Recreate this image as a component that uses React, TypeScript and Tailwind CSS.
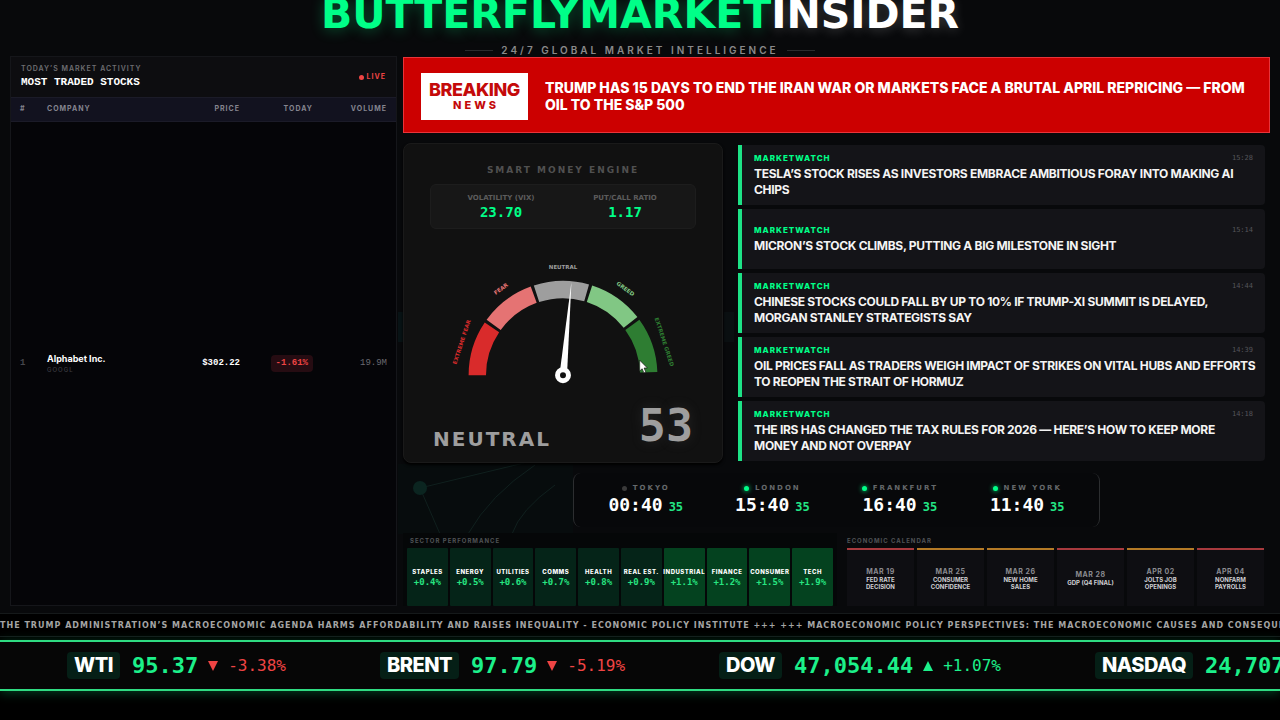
import type { ReactNode } from "react";

const inter = "font-['Inter',sans-serif]";
const mono = "font-['DejaVu_Sans_Mono',monospace]";
const wide = "font-['DejaVu_Sans',sans-serif]";

const news = [
  { time: "15:28", title: "TESLA’S STOCK RISES AS INVESTORS EMBRACE AMBITIOUS FORAY INTO MAKING AI CHIPS" },
  { time: "15:14", title: "MICRON’S STOCK CLIMBS, PUTTING A BIG MILESTONE IN SIGHT" },
  { time: "14:44", title: "CHINESE STOCKS COULD FALL BY UP TO 10% IF TRUMP-XI SUMMIT IS DELAYED, MORGAN STANLEY STRATEGISTS SAY" },
  { time: "14:39", title: "OIL PRICES FALL AS TRADERS WEIGH IMPACT OF STRIKES ON VITAL HUBS AND EFFORTS TO REOPEN THE STRAIT OF HORMUZ" },
  { time: "14:18", title: "THE IRS HAS CHANGED THE TAX RULES FOR 2026 — HERE’S HOW TO KEEP MORE MONEY AND NOT OVERPAY" },
];

const clocks = [
  { city: "TOKYO", time: "00:40", open: false },
  { city: "LONDON", time: "15:40", open: true },
  { city: "FRANKFURT", time: "16:40", open: true },
  { city: "NEW YORK", time: "11:40", open: true },
];

const sectors = [
  { name: "STAPLES", change: "+0.4%", strong: false },
  { name: "ENERGY", change: "+0.5%", strong: false },
  { name: "UTILITIES", change: "+0.6%", strong: false },
  { name: "COMMS", change: "+0.7%", strong: false },
  { name: "HEALTH", change: "+0.8%", strong: false },
  { name: "REAL EST.", change: "+0.9%", strong: false },
  { name: "INDUSTRIAL", change: "+1.1%", strong: true },
  { name: "FINANCE", change: "+1.2%", strong: true },
  { name: "CONSUMER", change: "+1.5%", strong: true },
  { name: "TECH", change: "+1.9%", strong: true },
];

const events = [
  { date: "MAR 19", name: "FED RATE DECISION", high: true },
  { date: "MAR 25", name: "CONSUMER CONFIDENCE", high: false },
  { date: "MAR 26", name: "NEW HOME SALES", high: false },
  { date: "MAR 28", name: "GDP (Q4 FINAL)", high: true },
  { date: "APR 02", name: "JOLTS JOB OPENINGS", high: false },
  { date: "APR 04", name: "NONFARM PAYROLLS", high: true },
];

const quotes = [
  { symbol: "WTI", price: "95.37", change: "-3.38%", up: false },
  { symbol: "BRENT", price: "97.79", change: "-5.19%", up: false },
  { symbol: "DOW", price: "47,054.44", change: "+1.07%", up: true },
  { symbol: "NASDAQ", price: "24,707.12", change: "+1.24%", up: true },
];

function Header() {
  return (
    <header className="flex h-14 flex-col items-center">
      <h1 className={`${wide} -mt-1 text-[41px] leading-9 font-bold whitespace-nowrap text-white [text-shadow:0_2px_12px_rgba(255,255,255,0.2)]`}>
        <span className="text-[#00ff88] [text-shadow:0_2px_14px_rgba(0,255,136,0.3)]">BUTTERFLYMARKET</span>INSIDER
      </h1>
      <div className="mt-3 flex items-center gap-2">
        <span className="h-px w-7 bg-[#2a2c2e]" />
        <p className={`${inter} text-[10px] leading-3 font-semibold tracking-[3px] text-[#8a8a8a]`}>24/7 GLOBAL MARKET INTELLIGENCE</p>
        <span className="h-px w-7 bg-[#2a2c2e]" />
      </div>
    </header>
  );
}

function Th({ children, className }: { children: ReactNode; className: string }) {
  return <th scope="col" className={`py-0 font-bold ${className}`}>{children}</th>;
}

function MostTraded() {
  return (
    <section className="grid grid-rows-[40px_1fr] border border-[#15161a] bg-[#050508]">
      <div className="flex items-center justify-between bg-[#0d0d10] px-[10px]">
        <div>
          <p className={`${inter} text-[7px] leading-[10px] font-semibold tracking-[1px] text-[#6d6d72]`}>TODAY’S MARKET ACTIVITY</p>
          <h2 className="font-['Liberation_Mono',monospace] text-[11px] leading-4 font-bold text-white">MOST TRADED STOCKS</h2>
        </div>
        <p className={`${inter} flex items-center gap-[3px] text-[7px] font-bold tracking-[1px] text-[#ef4444]`}>
          <span className="size-[5px] rounded-full bg-[#ef4444]" />LIVE
        </p>
      </div>
      <table className="h-full w-full border-collapse">
        <thead>
          <tr className={`${inter} h-6 border-y border-[#1b1b28] bg-[#12121f] text-[7px] tracking-[1px] text-[#85858f]`}>
            <Th className="w-9 pl-[9px] text-left">#</Th>
            <Th className="text-left">COMPANY</Th>
            <Th className="w-20 text-right">PRICE</Th>
            <Th className="w-[73px] text-right">TODAY</Th>
            <Th className="w-[83px] pr-[9px] text-right">VOLUME</Th>
          </tr>
        </thead>
        <tbody>
          <tr className="font-['Liberation_Mono',monospace] text-[9px] font-bold">
            <td className="pl-[9px] text-[#46464c]">1</td>
            <td className={inter}>
              <p className="text-[9px] leading-3 font-bold text-white">Alphabet Inc.</p>
              <p className="text-[6px] leading-[10px] font-medium tracking-[1px] text-[#3c3c42]">GOOGL</p>
            </td>
            <td className="text-right text-white">$302.22</td>
            <td className="text-right">
              <span className="inline-block rounded-sm bg-[#260c12] px-[5px] py-[2px] text-[#ef4444]">-1.61%</span>
            </td>
            <td className="pr-[9px] text-right font-normal text-[#6a6a70]">19.9M</td>
          </tr>
        </tbody>
      </table>
    </section>
  );
}

function Breaking() {
  return (
    <section className={`${inter} flex h-[76px] items-center gap-[17px] border border-[#e8343a] bg-[#cc0000] px-[17px] pt-[14px] pb-3`}>
      <div className="flex h-[47px] w-[107px] shrink-0 flex-col items-center justify-center bg-white text-[#c40a0a]">
        <span className="text-[18px] leading-[17px] font-extrabold tracking-tight">BREAKING</span>
        <span className="pl-[3px] text-[11px] leading-[14px] font-extrabold tracking-[3px]">NEWS</span>
      </div>
      <h2 className="text-[14px] leading-[17px] font-extrabold text-white">
        TRUMP HAS 15 DAYS TO END THE IRAN WAR OR MARKETS FACE A BRUTAL APRIL REPRICING — FROM OIL TO THE S&amp;P 500
      </h2>
    </section>
  );
}

function polar(deg: number, r: number) {
  const a = (deg * Math.PI) / 180;
  return `${(320 + r * Math.cos(a)).toFixed(2)} ${(250 - r * Math.sin(a)).toFixed(2)}`;
}

function Gauge() {
  const colors = ["#d92b2b", "#e57373", "#9e9e9e", "#81c784", "#2e7d32"];
  const labels = [
    { text: "EXTREME FEAR", x: 116, y: 183, r: -72, fill: "#d92b2b" },
    { text: "FEAR", x: 195, y: 76, r: -36, fill: "#e57373" },
    { text: "NEUTRAL", x: 320, y: 33, r: 0, fill: "#9e9e9e" },
    { text: "GREED", x: 446, y: 76, r: 36, fill: "#81c784" },
    { text: "EXTREME GREED", x: 524, y: 183, r: 72, fill: "#2e7d32" },
  ];
  return (
    <svg viewBox="0 0 640 290" className="block w-full" role="img" aria-label="Sentiment gauge">
      {colors.map((c, i) => {
        const a = 180 - i * 36;
        const b = a - 34;
        return <path key={c} fill={c} d={`M${polar(a, 190)}A190 190 0 0 1 ${polar(b, 190)}L${polar(b, 155)}A155 155 0 0 0 ${polar(a, 155)}Z`} />;
      })}
      {labels.map((l) => (
        <text key={l.text} x={l.x} y={l.y} dy="4" fill={l.fill} fontSize="11" fontWeight="700" fontFamily="DejaVu Sans, sans-serif" textAnchor="middle" transform={`rotate(${l.r} ${l.x} ${l.y})`}>
          {l.text}
        </text>
      ))}
      <path d="M313 249L337 62L328 251Z" fill="#fff" />
      <circle cx="320" cy="250" r="11" fill="#111" stroke="#fff" strokeWidth="10" />
    </svg>
  );
}

function Engine() {
  return (
    <section className="relative flex w-80 shrink-0 flex-col rounded-lg border border-[#1a1a1a] bg-[#111111] pt-5 pb-[10px] shadow-[0_2px_3px_#000]">
      <h2 className={`${wide} text-center text-[9px] leading-3 font-bold tracking-[2px] text-[#505050]`}>SMART MONEY ENGINE</h2>
      <dl className="mx-[26px] mt-2 grid h-[45px] grid-cols-2 items-center rounded-md border border-[#1d1d1d] bg-[#171717] px-2 text-center">
        <div>
          <dt className={`${wide} text-[7px] leading-[10px] font-bold text-[#5c5c5c]`}>VOLATILITY (VIX)</dt>
          <dd className={`${mono} text-[14px] leading-[18px] font-bold text-[#00ff88]`}>23.70</dd>
        </div>
        <div>
          <dt className={`${wide} text-[7px] leading-[10px] font-bold text-[#5c5c5c]`}>PUT/CALL RATIO</dt>
          <dd className={`${mono} text-[14px] leading-[18px] font-bold text-[#00ff88]`}>1.17</dd>
        </div>
      </dl>
      <div className="mt-[22px]"><Gauge /></div>
      <div className="mt-[5px] flex items-end justify-between px-[29px] text-[#9e9e9e]">
        <p className={`${wide} pb-[1px] text-[20px] leading-6 font-bold tracking-[2px]`}>NEUTRAL</p>
        <p className={`${mono} text-[45px] leading-[52px] font-bold [text-shadow:0_0_14px_rgba(158,158,158,0.15)]`}>53</p>
      </div>
      <svg viewBox="0 0 12 18" className="absolute top-[215px] left-[235px] h-4 w-[10px]" aria-hidden="true">
        <path d="M.8 .8v13l3-2.7 2.1 5 2.3-1-2.1-4.9h4z" fill="#fff" stroke="#111" strokeWidth=".8" />
      </svg>
    </section>
  );
}

function NewsList() {
  return (
    <ul className={`${inter} flex min-w-0 flex-1 flex-col gap-1 py-[2px] pr-[5px]`}>
      {news.map((n) => (
        <li key={n.time} className="flex flex-1 flex-col justify-center rounded-r-sm border-l-4 border-[#1de286] bg-[#141418] pr-1 pl-3">
          <div className="flex items-center justify-between pr-2 leading-[10px]">
            <span className="text-[8px] font-extrabold tracking-[1px] text-[#00ff88]">MARKETWATCH</span>
            <time className={`${mono} text-[7px] text-[#55555a]`}>{n.time}</time>
          </div>
          <h3 className="mt-[3px] text-[12px] leading-4 font-bold tracking-tight text-[#f4f4f4]">{n.title}</h3>
        </li>
      ))}
    </ul>
  );
}

function Clocks() {
  return (
    <ul className="flex h-[54px] items-center gap-[52px] self-center rounded-lg border-x border-[#2c2e30] bg-[#07080a] px-[34px]">
      {clocks.map((c) => (
        <li key={c.city} className="flex flex-col items-center">
          <div className="flex items-center gap-[6px]">
            <span className={c.open ? "size-[5px] rounded-full bg-[#00ff88] shadow-[0_0_5px_#00ff88]" : "size-[5px] rounded-full bg-[#3a3a3a]"} />
            <span className={`${wide} text-[7px] leading-[10px] font-bold tracking-[2px] whitespace-nowrap text-[#65686b]`}>{c.city}</span>
          </div>
          <div className={`${mono} flex items-baseline gap-[6px] font-bold`}>
            <span className="text-[18px] leading-6 text-white">{c.time}</span>
            <span className="text-[12px] text-[#22e584]">35</span>
          </div>
        </li>
      ))}
    </ul>
  );
}

function Sectors() {
  return (
    <section className="flex w-[434px] shrink-0 flex-col bg-[#050708] px-1">
      <h2 className={`${inter} px-[3px] text-[6px] leading-[15px] font-bold tracking-[1px] text-[#505356]`}>SECTOR PERFORMANCE</h2>
      <ul className="grid flex-1 grid-cols-10 gap-[2px]">
        {sectors.map((s) => (
          <li key={s.name} className={`flex min-w-0 flex-col items-center justify-center rounded-[1px] ${s.strong ? "bg-[#04421f]" : "bg-[#052418]"}`}>
            <span className={`${inter} text-[6px] leading-[10px] font-extrabold tracking-[0.5px] whitespace-nowrap text-white`}>{s.name}</span>
            <span className={`${mono} text-[9px] leading-[11px] font-bold text-[#27e481]`}>{s.change}</span>
          </li>
        ))}
      </ul>
    </section>
  );
}

function Calendar() {
  return (
    <section className={`${inter} flex min-w-0 flex-1 flex-col pr-[6px]`}>
      <h2 className="text-[6px] leading-[15px] font-bold tracking-[1px] text-[#505356]">ECONOMIC CALENDAR</h2>
      <ul className="grid flex-1 grid-cols-6 gap-[3px]">
        {events.map((e) => (
          <li key={e.date} className={`flex flex-col items-center justify-center border-t-2 bg-[#0e0e12] px-3 text-center ${e.high ? "border-[#a83a3e]" : "border-[#b47a26]"}`}>
            <span className="text-[7px] leading-[9px] font-bold tracking-[0.5px] text-[#8b8b90]">{e.date}</span>
            <span className="-mx-3 max-w-[52px] text-[6px] leading-[7px] font-bold text-[#cfcfd2]">{e.name}</span>
          </li>
        ))}
      </ul>
    </section>
  );
}

function Backdrop() {
  return (
    <svg viewBox="0 0 1280 720" preserveAspectRatio="none" className="absolute inset-0 h-full w-full" aria-hidden="true">
      <rect x="398" y="464" width="175" height="70" fill="#070c0d" />
      <g fill="none" stroke="#10201e" strokeWidth="1">
        <path d="M420 488L524 463M420 488L440 534M468 534Q490 495 535 465M512 534Q520 510 555 485" />
      </g>
      <circle cx="420" cy="488" r="7" fill="#0b2520" />
      <rect x="398" y="312" width="5" height="30" fill="#081315" />
      <rect x="724" y="312" width="10" height="30" fill="#0a0f11" />
    </svg>
  );
}

export default function App() {
  return (
    <div className="relative flex min-h-screen flex-col overflow-hidden bg-[#08090b]">
      <Backdrop />
      <div className="relative">
        <Header />
        <main className="grid grid-cols-[387px_minmax(0,1fr)] gap-[6px] px-[10px] pb-[7px]">
          <MostTraded />
          <div className="flex min-w-0 flex-col gap-[10px] pt-px">
            <Breaking />
            <div className="flex gap-[15px]">
              <Engine />
              <NewsList />
            </div>
            <Clocks />
            <div className="-mt-1 flex h-[73px] gap-[10px]">
              <Sectors />
              <Calendar />
            </div>
          </div>
        </main>
      </div>
      <footer className="relative flex-1 bg-black">
        <p className={`${wide} h-6 overflow-hidden border-y border-[#15191a] text-[8px] leading-[23px] font-bold tracking-[1px] whitespace-nowrap text-[#a4a4a4]`}>
          THE TRUMP ADMINISTRATION’S MACROECONOMIC AGENDA HARMS AFFORDABILITY AND RAISES INEQUALITY - ECONOMIC POLICY INSTITUTE +++ +++ MACROECONOMIC POLICY PERSPECTIVES: THE MACROECONOMIC CAUSES AND CONSEQUENCES
        </p>
        <ul className="mt-[3px] flex h-[51px] items-center gap-[94px] overflow-hidden border-y-2 border-[#2fdc82] bg-[#060606] pl-[67px] shadow-[0_2px_10px_rgba(0,255,136,0.25)]">
          {quotes.map((q) => (
            <li key={q.symbol} className="flex shrink-0 items-center">
              <span className={`${inter} rounded-sm bg-[#051f16] px-[7px] text-[20px] leading-[27px] font-extrabold tracking-tight text-white`}>{q.symbol}</span>
              <span className={`${mono} ml-3 text-[22px] leading-7 font-bold text-[#1cf08a]`}>{q.price}</span>
              <span className={`${mono} ml-[10px] flex items-center gap-[10px] text-[16px] ${q.up ? "text-[#1cf08a]" : "text-[#ef4444]"}`}>
                <svg viewBox="0 0 10 10" className="size-[10px]" aria-hidden="true">
                  <path d={q.up ? "M5 0L10 10H0z" : "M0 0H10L5 10z"} fill="currentColor" />
                </svg>
                {q.change}
              </span>
            </li>
          ))}
        </ul>
      </footer>
    </div>
  );
}
